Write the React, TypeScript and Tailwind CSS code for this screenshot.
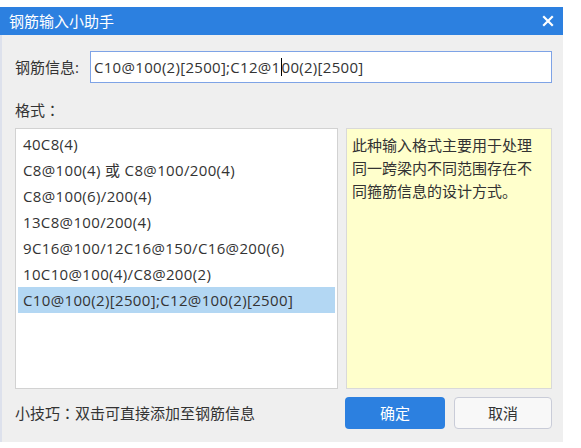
import React from "react";

const items = [
  "40C8(4)",
  "C8@100(4) 或 C8@100/200(4)",
  "C8@100(6)/200(4)",
  "13C8@100/200(4)",
  "9C16@100/12C16@150/C16@200(6)",
  "10C10@100(4)/C8@200(2)",
  "C10@100(2)[2500];C12@100(2)[2500]",
];

const font = "font-['Open_Sans','Noto_Sans_CJK_SC',sans-serif]";
const colon = "font-['Noto_Sans_CJK_JP',sans-serif]";

export default function App() {
  return (
    <div className={`w-[581px] h-[448px] bg-white ${font}`}>
      <div className="pt-[7px]">
        <div className="w-[563px] h-[435px] flex flex-col bg-[#efefef] border-l-2 border-[#dde1ec]">
          <div className="h-[28px] bg-[#2c80e0] flex items-center justify-between -ml-[2px] pl-[9px] pr-[9px]">
            <span className="text-white text-[15px] leading-none">钢筋输入小助手</span>
            <svg width="12" height="12" viewBox="0 0 12 12">
              <path d="M2 2 L10 10 M10 2 L2 10" stroke="white" strokeWidth="2.2" strokeLinecap="square" />
            </svg>
          </div>
          <div className="flex-1 flex flex-col pl-[13px] pr-[11px]">
            <div className="mt-[16px] h-[32px] flex items-center">
              <span className="w-[75px] text-[15px] text-[#333]">钢筋信息:</span>
              <div className="flex-1 h-[32px] bg-white border border-[#7ea3e6] flex items-center pl-[3px] text-[15px] tracking-[0.3px] text-[#333]">
                <span>C10@100(2)[2500];C12@1</span>
                <span className="inline-block w-px h-[18px] bg-black" />
                <span>00(2)[2500]</span>
              </div>
            </div>
            <div className="mt-[17px] h-[20px] flex items-center text-[15px] text-[#333]">
              格式<span className={colon}>：</span>
            </div>
            <div className="mt-[8px] flex gap-[8px]">
              <div className="w-[323px] h-[261px] bg-white border border-[#d2d2d2] pt-[2px] px-[2px]">
                {items.map((t, i) => (
                  <div
                    key={i}
                    className={`h-[26px] flex items-center pl-[5px] text-[15px] tracking-[0.35px] text-[#333] ${i === 6 ? "bg-[#b3d7f3]" : ""}`}
                  >
                    {t}
                  </div>
                ))}
              </div>
              <div className="w-[206px] h-[261px] bg-[#ffffcc] border border-[#d9d9d9] px-[5px] pt-[5px] text-[15px] leading-[23px] text-[#333]">
                此种输入格式主要用于处理同一跨梁内不同范围存在不同箍筋信息的设计方式。
              </div>
            </div>
            <div className="mt-[8px] h-[32px] flex items-center">
              <span className="flex-1 text-[15px] text-[#333]">
                小技巧<span className={colon}>：</span>双击可直接添加至钢筋信息
              </span>
              <button className="w-[100px] h-[32px] rounded-[4px] bg-[#2c80e0] text-white text-[15px]">确定</button>
              <button className="ml-[9px] w-[98px] h-[32px] rounded-[4px] bg-[#f8f8f8] border border-[#c9ccd8] text-[15px] text-[#333]">取消</button>
            </div>
          </div>
        </div>
      </div>
    </div>
  );
}
